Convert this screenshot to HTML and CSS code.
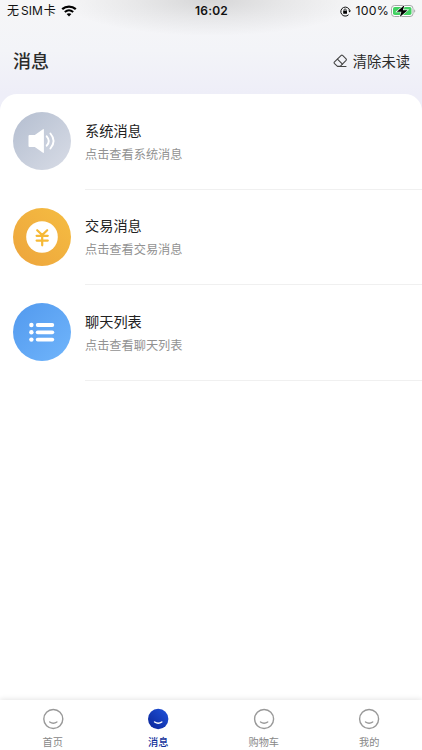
FILE: index.html
```
<!DOCTYPE html>
<html lang="zh-CN">
<head>
    <meta charset="UTF-8">
    <meta name="viewport" content="width=device-width, initial-scale=1.0">
    <title>消息</title>
    <link rel="stylesheet" href="styles.css">
</head>
<body>

    <div class="status-bar">
        <div class="status-left">
            <span class="carrier">无<span class="sim">SIM</span>卡</span>
            <svg class="wifi" width="16" height="12" viewBox="0 0 16 12">
                <path d="M1.2 4.2C5.1.8 10.9.8 14.8 4.2" fill="none" stroke="#000" stroke-width="2.3"/>
                <path d="M3.8 7.1c2.5-2.2 5.9-2.2 8.4 0" fill="none" stroke="#000" stroke-width="2"/>
                <path d="M5.6 9.1c1.5-1.2 3.3-1.2 4.8 0L8 11.5z"/>
            </svg>
        </div>
        <div class="time">16:02</div>
        <div class="status-right">
            <svg class="lock" width="11" height="11" viewBox="0 0 11 11">
                <path d="M9.7 4.5A4.5 4.5 0 1 0 8.6 8.7" fill="none" stroke="#111" stroke-width="1"/>
                <path d="M8.3 4.5h2.6L9.7 6.5z"/>
                <rect x="3.2" y="4.8" width="3.8" height="3" rx=".4"/>
                <path d="M4 5V4a1.1 1.1 0 0 1 2.2 0v1" fill="none" stroke="#111" stroke-width=".8"/>
            </svg>
            <span class="percent">100%</span>
            <svg class="battery" width="25" height="14" viewBox="0 0 25 14">
                <rect x=".5" y="1.5" width="21.5" height="11" rx="3" fill="#fff" stroke="#a5a8a8"/>
                <rect x="2" y="3" width="18.5" height="8" rx="1.8" fill="#42d162"/>
                <path d="M23.2 5.2v3.6c1.4-.6 1.4-3 0-3.6z" fill="#a5a8a8"/>
                <path d="M13.5 1L5.8 7.7h4.6L8.8 13l7.8-6.8h-4.7z" stroke="#fff" stroke-width="1.2" paint-order="stroke"/>
            </svg>
        </div>
    </div>

    <div class="header">
        <h1>消息</h1>
        <div class="clear">
            <svg width="15" height="14" viewBox="0 0 15 14" fill="none" stroke="#444" stroke-width="1.1" stroke-linejoin="round" stroke-linecap="round">
                <path d="M1.3 8.2L8.2 1.4q.7-.6 1.4 0l3.5 3.5q.6.7 0 1.4L7.2 12.4H4.5L1.3 9.4q-.5-.6 0-1.2z"/>
                <path d="M4.4 5.2l5 5M6.5 12.5h6.5"/>
            </svg>
            <span>清除未读</span>
        </div>
    </div>

    <div class="list">
        <div class="item">
            <div class="icon system">
                <svg width="58" height="58" viewBox="0 0 58 58">
                    <path d="M16.5 23h5.3l8.2-5.8q.9-.5.9.5v22.6q0 1-.9.5L21.8 35h-5.3q-1 0-1-1V24q0-1 1-1z" fill="#fff"/>
                    <path d="M33.7 24.3q4.2 4.7 0 9.4M37.4 21.5q6.4 7.5 0 15" fill="none" stroke="#fff" stroke-width="1.9" stroke-linecap="round"/>
                </svg>
            </div>
            <div class="content">
                <div class="name">系统消息</div>
                <div class="desc">点击查看系统消息</div>
            </div>
        </div>
        <div class="item">
            <div class="icon trade">
                <svg width="58" height="58" viewBox="0 0 58 58">
                    <circle cx="29" cy="29" r="15.8" fill="#fff"/>
                    <path d="M24.2 22.2L29.2 27l5-4.8M23.6 27.8h11.2M23.6 32.6h11.2M29.2 27.5v9.8" fill="none" stroke="#f6b936" stroke-width="2.2" stroke-linecap="round"/>
                </svg>
            </div>
            <div class="content">
                <div class="name">交易消息</div>
                <div class="desc">点击查看交易消息</div>
            </div>
        </div>
        <div class="item">
            <div class="icon chat">
                <svg width="58" height="58" viewBox="0 0 58 58" fill="#fff">
                    <circle cx="18.4" cy="22" r="2.2"/>
                    <circle cx="18.4" cy="29.3" r="2.2"/>
                    <circle cx="18.4" cy="36.6" r="2.2"/>
                    <rect x="22.8" y="20.1" width="18.4" height="3.8" rx="1.9"/>
                    <rect x="22.8" y="27.4" width="18.4" height="3.8" rx="1.9"/>
                    <rect x="22.8" y="34.7" width="18.4" height="3.8" rx="1.9"/>
                </svg>
            </div>
            <div class="content">
                <div class="name">聊天列表</div>
                <div class="desc">点击查看聊天列表</div>
            </div>
        </div>
    </div>

    <div class="tabbar">
        <div class="tab">
            <svg width="22" height="22" viewBox="0 0 22 22" fill="none" stroke="#999" stroke-width="1.4" stroke-linecap="round">
                <circle cx="11.3" cy="11" r="9.5"/>
                <path d="M7.7 14q3.6 2.6 7.2 0"/>
            </svg>
            <span>首页</span>
        </div>
        <div class="tab active">
            <svg width="22" height="22" viewBox="0 0 22 22">
                <defs>
                    <linearGradient id="face" x1="1" y1="0" x2="0" y2="1">
                        <stop offset="0" stop-color="#1f53dc"/>
                        <stop offset="1" stop-color="#0b2496"/>
                    </linearGradient>
                </defs>
                <circle cx="11.2" cy="11" r="10.2" fill="url(#face)"/>
                <path d="M7.6 14q3.6 2.6 7.2 0" fill="none" stroke="#fff" stroke-width="1.5" stroke-linecap="round"/>
            </svg>
            <span>消息</span>
        </div>
        <div class="tab">
            <svg width="22" height="22" viewBox="0 0 22 22" fill="none" stroke="#999" stroke-width="1.4" stroke-linecap="round">
                <circle cx="11.1" cy="11" r="9.5"/>
                <path d="M7.5 14q3.6 2.6 7.2 0"/>
            </svg>
            <span>购物车</span>
        </div>
        <div class="tab">
            <svg width="22" height="22" viewBox="0 0 22 22" fill="none" stroke="#999" stroke-width="1.4" stroke-linecap="round">
                <circle cx="11.1" cy="11" r="9.5"/>
                <path d="M7.5 14q3.6 2.6 7.2 0"/>
            </svg>
            <span>我的</span>
        </div>
    </div>

</body>
</html>
```
FILE: styles.css
```
* {
    box-sizing: border-box;
}
body {
    display: flex;
    flex-direction: column;
    height: 100vh;
    margin: 0;
    overflow: hidden;
    font-family: Inter, "Noto Sans CJK SC", sans-serif;
    color: #2b2b2b;
    background: radial-gradient(ellipse 150px 36px at 211px 0, rgba(0, 0, 0, 0.13), rgba(0, 0, 0, 0.06) 50%, rgba(0, 0, 0, 0) 100%),
        linear-gradient(#f6f6f7 0, #f3f4f8 50px, #eeeef8 94px, #eeeef8 115px);
}
svg {
    display: block;
    flex-shrink: 0;
}
.status-bar {
    display: grid;
    grid-template-columns: 1fr auto 1fr;
    align-items: center;
    height: 22px;
    padding: 0 6px 0 7px;
    font-size: 12px;
    line-height: 22px;
    color: #111;
}
.status-left,
.status-right {
    display: flex;
    align-items: center;
}
.status-right {
    justify-content: flex-end;
}
.sim {
    margin: 0 1px 0 2px;
}
.wifi {
    margin-left: 5px;
}
.time {
    font-weight: 600;
    letter-spacing: 0.2px;
}
.lock {
    margin-right: 5px;
}
.battery {
    margin-top: -1px;
}
.percent {
    margin-right: 2px;
    font-size: 12.3px;
    letter-spacing: 0.2px;
}
.header {
    display: flex;
    justify-content: space-between;
    align-items: center;
    height: 72px;
    padding: 5px 12px 0 13px;
}
h1 {
    margin: 0 0 1px;
    font-size: 18px;
    font-weight: 500;
}
.clear {
    display: flex;
    align-items: center;
    gap: 5px;
    font-size: 14.3px;
}
.list {
    flex: 1;
    background-color: #fff;
    border-radius: 17px 17px 0 0;
}
.item {
    display: flex;
    align-items: center;
    height: 95.5px;
    padding-left: 12.5px;
}
.icon {
    width: 58px;
    height: 58px;
    margin: -1px 14.5px 0 0;
    border-radius: 50%;
}
.icon svg {
    width: 100%;
    height: 100%;
}
.system {
    background: linear-gradient(135deg, #b4bed0, #d8dce6);
}
.trade {
    background: linear-gradient(45deg, #eda43c, #f5bd42);
}
.chat {
    background: linear-gradient(135deg, #5299ee, #70b5fb);
}
.content {
    flex: 1;
    height: 100%;
    padding-top: 25.5px;
    border-bottom: 1px solid #f0f0f0;
}
.name {
    font-size: 14.2px;
    line-height: 22px;
    color: #222;
}
.desc {
    margin-top: 3px;
    font-size: 12.2px;
    line-height: 20px;
    color: #929292;
}
.tabbar {
    display: flex;
    height: 50px;
    background-color: #fff;
    box-shadow: 0 -1px 5px rgba(0, 0, 0, 0.1);
}
.tab {
    display: flex;
    flex: 1;
    flex-direction: column;
    align-items: center;
    padding-top: 8px;
    font-size: 10.2px;
    line-height: 14px;
    color: #888;
}
.tab span {
    margin-top: 5px;
}
.active {
    font-weight: 500;
    color: #12309a;
}
```
